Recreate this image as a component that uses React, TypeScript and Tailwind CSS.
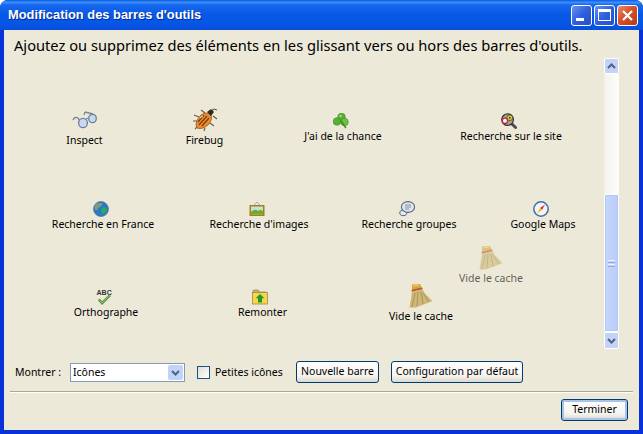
import React from "react";

const Glasses = () => (
  <svg width="26" height="25" viewBox="0 -3 26 25" fill="none">
    <path d="M1 10 Q3 6 6 8 L8 11" stroke="#7d8794" strokeWidth="1.4" />
    <path d="M14 9 L16 8 M13 2 L21 4 M13 2 L12 5" stroke="#7d8794" strokeWidth="1.3" />
    <ellipse cx="11" cy="13" rx="4.4" ry="4.6" fill="#c9d9f2" stroke="#6e7f9c" strokeWidth="1.3" />
    <ellipse cx="20.5" cy="8.5" rx="3.8" ry="4.2" fill="#c9d9f2" stroke="#6e7f9c" strokeWidth="1.3" />
  </svg>
);

const Bug = () => (
  <svg width="26" height="25" viewBox="0 0 26 25" fill="none">
    <path d="M7 10 L2 8 M5 14 L1 14 M7 18 L3 22 M13 21 L12 24 M18 16 L22 19 M13 6 L9 3 M18 5 L22 2 L25 3 M21 9 L25 12" stroke="#6b5a3a" strokeWidth="1.1" />
    <path d="M5 21 Q2 15 9 8 Q14 4 19 8 Q21 12 17 17 Q11 23 5 21Z" fill="#f08c30" stroke="#8a5a20" strokeWidth="0.8" />
    <path d="M7 18 L15 9 M10 19 L17 11 M6 15 L12 8" stroke="#7a3a10" strokeWidth="1.2" />
    <path d="M15 5 L19 2 L22 5 L19 9 Z" fill="#2b2b2b" />
    <path d="M8 11 L11 9" stroke="#ffd9a8" strokeWidth="1" />
  </svg>
);

const Clover = () => (
  <svg width="16" height="16" viewBox="0 0 16 16">
    <circle cx="8.5" cy="4" r="3.8" fill="#58b030" stroke="#3e8a28" strokeWidth="0.6" />
    <circle cx="4" cy="8.5" r="3.8" fill="#58b030" stroke="#3e8a28" strokeWidth="0.6" />
    <circle cx="11.5" cy="9" r="3.8" fill="#6fc040" stroke="#3e8a28" strokeWidth="0.6" />
    <path d="M8 8 L13 15" stroke="#3e8a28" strokeWidth="1.4" />
    <circle cx="7.5" cy="3" r="1.2" fill="#a4dc7c" />
  </svg>
);

const SiteSearch = () => (
  <svg width="16" height="16" viewBox="0 0 17 17">
    <path d="M10 10 L15.5 15.5" stroke="#4a4a4a" strokeWidth="3" strokeLinecap="round" />
    <circle cx="7" cy="7" r="6.2" fill="#a8a294" stroke="#333" strokeWidth="1.3" />
    <circle cx="4.2" cy="8.2" r="2.8" fill="#fff" stroke="#c22c3c" strokeWidth="1.5" />
    <circle cx="9.4" cy="5" r="3" fill="#f4d23a" stroke="#333" strokeWidth="0.8" />
    <circle cx="9.4" cy="5" r="1" fill="#333" />
  </svg>
);

const Globe = () => (
  <svg width="16" height="16" viewBox="0 0 16 16">
    <circle cx="8" cy="8" r="7.5" fill="#2a78c8" stroke="#6a7a88" strokeWidth="0.8" />
    <path d="M3 3 Q7 1 10 3 Q8 6 5 7 Q5 10 2 9 Q1 5 3 3Z" fill="#7c9a84" />
    <path d="M9 7 Q13 5 14 9 Q12 13 9 13 Q7 10 9 7Z" fill="#2aa860" />
  </svg>
);

const Picture = () => (
  <svg width="16" height="16" viewBox="0 0 16 16">
    <path d="M5 4 L8 1 L11 4" fill="none" stroke="#9a9a9a" strokeWidth="0.8" />
    <rect x="0.5" y="4" width="15" height="11" fill="#b07c10" />
    <rect x="2" y="5.5" width="12" height="8" fill="#bfe0ee" />
    <path d="M2 11 Q6 7 9 10 Q11 8 14 10 L14 13.5 L2 13.5Z" fill="#6aae2c" />
    <circle cx="11" cy="7.4" r="1.2" fill="#f6e36a" />
  </svg>
);

const Chat = () => (
  <svg width="16" height="16" viewBox="0 0 16 16">
    <path d="M3 9 Q0 10 0.8 13 Q2 15.5 6 14.5 Q9 13 8 10Z" fill="#e8ecf2" stroke="#56677c" strokeWidth="1" />
    <ellipse cx="9" cy="6" rx="6.6" ry="5.4" fill="#dfe5ee" stroke="#56677c" strokeWidth="1.1" />
    <path d="M6 4 H12 M6 6 H12 M6 8 H10" stroke="#7a8a9e" strokeWidth="0.9" />
  </svg>
);

const Compass = () => (
  <svg width="16" height="16" viewBox="0 0 16 16">
    <circle cx="8" cy="8" r="7.2" fill="#f2f4f8" stroke="#3f6ea8" strokeWidth="1.5" />
    <path d="M12 3.5 L7 7 L9 9 Z" fill="#e02a2a" />
    <path d="M4 12.5 L7 7 L9 9 Z" fill="#f0c020" />
  </svg>
);

const Broom = () => (
  <svg width="24" height="24" viewBox="0 0 24 24">
    <path d="M3 0.5 L11 0 L13.5 5 L3 7.5 Z" fill="#d8a63c" />
    <path d="M3 7.5 L13.5 5 L16 9.5 L23.5 17 L15 20.5 L7 23.5 L0.5 23.5 L2 14 Z" fill="#cdb878" />
    <path d="M6 9 L3 23 M9 8 L8 22 M12 8 L14 20 M14 9 L20 18" stroke="#a68f50" strokeWidth="0.9" />
    <path d="M2.6 6.8 L13.3 4.2" stroke="#b4532c" strokeWidth="1.4" />
    <path d="M4 2 L10 1" stroke="#f0d080" strokeWidth="1" />
  </svg>
);

const Check = () => (
  <svg width="16" height="16" viewBox="0 0 16 17">
    <text x="0" y="6.5" fontSize="7.5" fontWeight="700" fill="#333" fontFamily="'Liberation Sans',sans-serif">ABC</text>
    <path d="M2.5 11 L6 15 L14.5 6.5" fill="none" stroke="#4e8f3a" strokeWidth="2.6" />
    <path d="M2.5 11 L6 15 L14.5 6.5" fill="none" stroke="#93cf6c" strokeWidth="1" />
  </svg>
);

const Folder = () => (
  <svg width="16" height="16" viewBox="0 0 16 16">
    <path d="M1 4 V2 Q1 1 2 1 H6 L8 3 H14 V4 Z" fill="#cbb469" stroke="#8a8250" strokeWidth="0.7" />
    <rect x="0.5" y="3.5" width="15" height="11.5" fill="#f8d648" stroke="#9a8a50" strokeWidth="0.8" />
    <path d="M8 5 L12.3 9.3 H10 V13.5 H6 V9.3 H3.7 Z" fill="#1c9a2c" />
  </svg>
);

const Chevron = ({ down }: { down?: boolean }) => (
  <svg width="9" height="6" viewBox="0 0 9 6" fill="none">
    <path d={down ? "M1 1 L4.5 4.5 L8 1" : "M1 5 L4.5 1.5 L8 5"} stroke="#4d6185" strokeWidth="2" />
  </svg>
);

const Item = ({ icon, label, className }: { icon: React.ReactNode; label: string; className: string }) => (
  <div className={"flex flex-col items-center shrink-0 " + className}>
    <div className="flex justify-center">{icon}</div>
    <span className="text-[10.5px] leading-[14px] mt-[1px] whitespace-nowrap">{label}</span>
  </div>
);

const SmallItem = ({ icon, label, className }: { icon: React.ReactNode; label: string; className: string }) => (
  <div className={"flex flex-col items-center shrink-0 pt-[2px] " + className}>
    <div className="flex justify-center mr-[5px]">{icon}</div>
    <span className="text-[10.5px] leading-[14px] whitespace-nowrap">{label}</span>
  </div>
);

const CapBtn = ({ children, red }: { children: React.ReactNode; red?: boolean }) => (
  <div
    className={
      "w-[21px] h-[21px] rounded-[3px] border border-white flex items-center justify-center " +
      (red
        ? "bg-[linear-gradient(135deg,#e88a6c,#d8502a_45%,#b83a14)]"
        : "bg-[linear-gradient(135deg,#6c93ee,#2f5fdc_50%,#2450cc)]")
    }
  >
    {children}
  </div>
);

const Btn = ({ label, className }: { label: string; className: string }) => (
  <button className={"h-[22px] shrink-0 rounded-[3px] border border-[#003c74] bg-[linear-gradient(#ffffff,#f4f3ee_70%,#dcd8ce)] text-[10.5px] text-black flex items-center justify-center whitespace-nowrap " + className}>
    {label}
  </button>
);

export default function App() {
  return (
    <div className="w-[643px] h-[434px] bg-white overflow-hidden font-['Noto_Sans','Liberation_Sans',sans-serif] text-black">
      <div className="w-full h-full rounded-t-[8px] flex flex-col overflow-hidden bg-[#0831d9]">
        {/* title bar */}
        <div className="h-[30px] shrink-0 flex items-center pl-[8px] pr-[5px] bg-[linear-gradient(#0a5ce0,#3c8ffb_8%,#1668ee_16%,#0858e6_50%,#0556e6_80%,#0a4ed8)]">
          <span className="text-white font-bold text-[12.87px] font-['Liberation_Sans',sans-serif] [text-shadow:1px_1px_0_#0a2a90]">
            Modification des barres d'outils
          </span>
          <div className="ml-auto flex gap-[2px]">
            <CapBtn>
              <div className="w-[8px] h-[3px] bg-white mt-[9px] -ml-[3px]" />
            </CapBtn>
            <CapBtn>
              <div className="w-[13px] h-[12px] border border-white border-t-[3px]" />
            </CapBtn>
            <CapBtn red>
              <svg width="13" height="13" viewBox="0 0 13 13">
                <path d="M2 2 L11 11 M11 2 L2 11" stroke="#fff" strokeWidth="2.2" />
              </svg>
            </CapBtn>
          </div>
        </div>

        {/* body */}
        <div className="flex-1 mx-[4px] mb-[4px] bg-[#ece9d8] flex flex-col min-h-0">
          <div className="h-[28px] shrink-0 flex items-center pl-[10px] text-[14.66px] leading-none whitespace-nowrap pt-[3px]">
            Ajoutez ou supprimez des éléments en les glissant vers ou hors des barres d'outils.
          </div>

          <div className="flex h-[291px] relative shrink-0">
            <div className="w-[600px] pt-[50px] flex flex-col gap-[39px] text-black">
              <div className="flex items-center h-[37px]">
                <Item icon={<Glasses />} label="Inspect" className="ml-[62px] w-[37px]" />
                <Item icon={<Bug />} label="Firebug" className="ml-[83px] w-[37px]" />
                <SmallItem icon={<Clover />} label="J'ai de la chance" className="ml-[80px] w-[80px]" />
                <SmallItem icon={<SiteSearch />} label="Recherche sur le site" className="ml-[78px] w-[100px]" />
              </div>
              <div className="flex items-center h-[37px] mt-[12px]">
                <SmallItem icon={<Globe />} label="Recherche en France" className="ml-[48px] w-[102px]" />
                <SmallItem icon={<Picture />} label="Recherche d'images" className="ml-[57px] w-[96px]" />
                <SmallItem icon={<Chat />} label="Recherche groupes" className="ml-[55px] w-[94px]" />
                <SmallItem icon={<Compass />} label="Google Maps" className="ml-[57px] w-[60px]" />
              </div>
              <div className="flex items-center h-[37px] mt-[12px]">
                <SmallItem icon={<Check />} label="Orthographe" className="ml-[71px] w-[62px]" />
                <SmallItem icon={<Folder />} label="Remonter" className="ml-[102px] w-[47px]" />
                <Item icon={<Broom />} label="Vide le cache" className="ml-[104px] mt-[2px] w-[62px]" />
              </div>
            </div>

            {/* dragged ghost */}
            <div className="absolute left-[456px] top-[188px] flex flex-col items-center opacity-60 w-[62px]">
              <Broom />
              <span className="text-[10.5px] leading-[14px] mt-[1px] whitespace-nowrap">Vide le cache</span>
            </div>

            {/* scrollbar */}
            <div className="w-[15px] shrink-0 flex flex-col">
              <div className="h-[16px] shrink-0 rounded-[2px] border border-white bg-[#c3d3f8] flex items-center justify-center">
                <Chevron />
              </div>
              <div className="flex-1 bg-[linear-gradient(90deg,#f3f1ec,#fefefb)]" />
              <div className="h-[138px] shrink-0 rounded-[2px] border border-white outline outline-1 -outline-offset-2 outline-[#aec5f5] bg-[linear-gradient(90deg,#c6d6fb,#b9cdfa)] flex flex-col items-center justify-center gap-[1px]">
                <div className="w-[7px] h-[1px] bg-[#eef3fe]" />
                <div className="w-[7px] h-[1px] bg-[#8fadf0]" />
                <div className="w-[7px] h-[1px] bg-[#eef3fe]" />
                <div className="w-[7px] h-[1px] bg-[#8fadf0]" />
              </div>
              <div className="h-[17px] shrink-0 rounded-[2px] border border-white bg-[#c3d3f8] flex items-center justify-center">
                <Chevron down />
              </div>
            </div>
          </div>

          {/* controls */}
          <div className="flex items-center h-[22px] mt-[12px] shrink-0 text-[10.5px]">
            <span className="ml-[11px] w-[55px] shrink-0 pt-[1px]">Montrer :</span>
            <div className="w-[115px] h-[19px] mt-[1px] shrink-0 border border-[#7f9db9] bg-white flex items-center pl-[2px] pr-[1px]">
              <span>Icônes</span>
              <div className="ml-auto w-[15px] h-[15px] rounded-[2px] bg-[#c3d3f8] flex items-center justify-center">
                <Chevron down />
              </div>
            </div>
            <div className="ml-[12px] mt-[1px] w-[13px] h-[13px] shrink-0 border border-[#1c5180] bg-[linear-gradient(135deg,#dcdcd7,#ffffff)]" />
            <span className="ml-[5px] w-[81px] shrink-0 whitespace-nowrap pt-[1px]">Petites icônes</span>
            <Btn label="Nouvelle barre" className="w-[83px]" />
            <Btn label="Configuration par défaut" className="ml-[12px] w-[132px]" />
          </div>

          {/* separator */}
          <div className="mx-[6px] mt-[8px] h-[2px] shrink-0 border-t border-[#aca899] bg-white" />

          <div className="flex justify-end pr-[11px] pt-[6px]">
            <Btn label="Terminer" className="w-[67px] shadow-[inset_0_0_0_2px_#a9c2ec]" />
          </div>
        </div>
      </div>
    </div>
  );
}
